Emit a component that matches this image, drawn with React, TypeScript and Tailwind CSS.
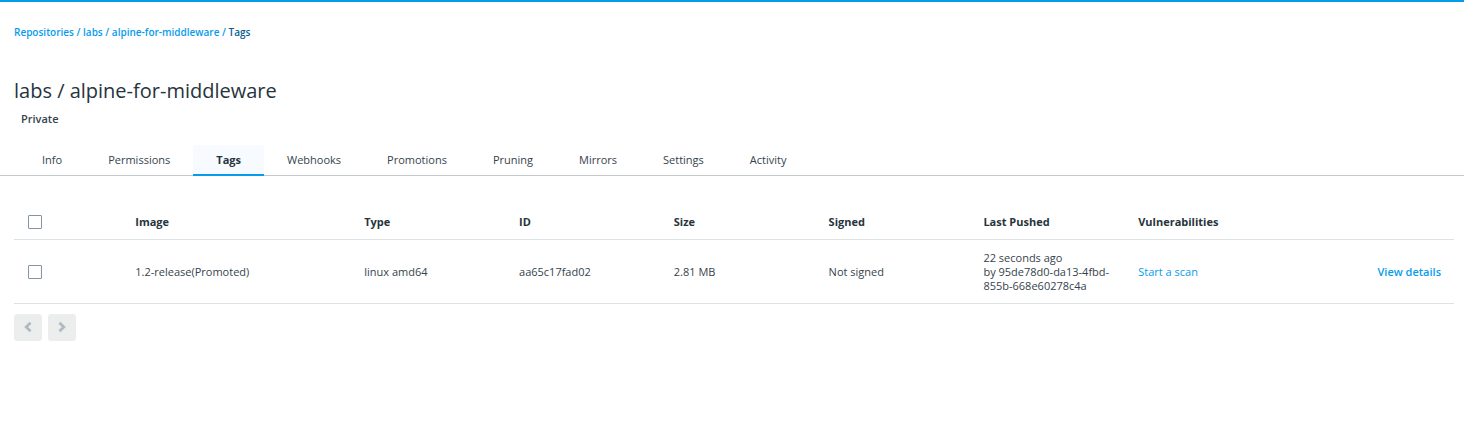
import React from "react";

const tabs = ["Info", "Permissions", "Tags", "Webhooks", "Promotions", "Pruning", "Mirrors", "Settings", "Activity"];

const columns = ["Image", "Type", "ID", "Size", "Signed", "Last Pushed", "Vulnerabilities"];

function Chevron({ d }: { d: string }) {
  return (
    <svg viewBox="0 0 10 12" className="h-3 w-2.5" fill="none" stroke="#b0bac2" strokeWidth="2.8" aria-hidden="true">
      <path d={d} />
    </svg>
  );
}

function Box({ label }: { label: string }) {
  return (
    <input
      type="checkbox"
      aria-label={label}
      className="block size-3.5 appearance-none rounded-[1px] border border-[#8494a4] bg-white checked:bg-[#069cec]"
    />
  );
}

export default function App() {
  return (
    <div className="border-t-2 border-[#069cec] bg-white font-['Open_Sans',sans-serif] text-[11px] leading-[14px] text-[#36434c]">
      <nav aria-label="Breadcrumb" className="px-3.5 pt-[23px] text-[10px] font-semibold text-[#069cec]">
        <a href="#repositories">Repositories</a> / <a href="#labs">labs</a> /{" "}
        <a href="#repository">alpine-for-middleware</a> / <span className="text-[#086094]">Tags</span>
      </nav>
      <h1 className="mt-10 px-3.5 text-[20px] leading-6 font-medium text-[#27343c]">labs / alpine-for-middleware</h1>
      <p className="mt-[9px] px-[21px] font-semibold">Private</p>
      <nav aria-label="Repository" className="mt-[19px] flex border-b border-[#c3c8ca] px-[19px]">
        {tabs.map((tab) => (
          <a
            key={tab}
            href={`#${tab.toLowerCase()}`}
            aria-current={tab === "Tags" ? "page" : undefined}
            className={
              tab === "Tags"
                ? "-mb-px border-b-2 border-[#069cec] bg-[#f7faff] px-[23px] pt-2 pb-[7px] font-bold text-[#27343c]"
                : "px-[23px] pt-2 pb-[7px]"
            }
          >
            {tab}
          </a>
        ))}
      </nav>
      <main className="pt-7 pr-2.5 pl-3.5">
        <table className="w-full table-fixed border-collapse text-left [&_td]:pt-0.5 [&_th]:pt-0.5">
          <colgroup>
            <col className="w-[7.45%]" />
            <col className="w-[15.9%]" />
            <col className="w-[10.75%]" />
            <col className="w-[10.75%]" />
            <col className="w-[10.75%]" />
            <col className="w-[10.75%]" />
            <col className="w-[10.75%]" />
            <col className="w-[10.75%]" />
            <col />
          </colgroup>
          <thead>
            <tr className="h-[35px] border-b border-[#dfe2e3]">
              <th className="pl-3.5"><Box label="Select all tags" /></th>
              {columns.map((column) => (
                <th key={column} className="px-3.5 font-bold text-[#27343c]">{column}</th>
              ))}
              <th aria-label="Actions" />
            </tr>
          </thead>
          <tbody>
            <tr className="h-16 border-b border-[#dfe2e3]">
              <td className="pl-3.5"><Box label="Select 1.2-release" /></td>
              <td className="px-3.5">1.2-release(Promoted)</td>
              <td className="px-3.5">linux amd64</td>
              <td className="px-3.5">aa65c17fad02</td>
              <td className="px-3.5">2.81 MB</td>
              <td className="px-3.5">Not signed</td>
              <td className="pr-3 pl-3.5">22 seconds ago<br />by 95de78d0-da13-4fbd-855b-668e60278c4a</td>
              <td className="px-3.5"><a href="#scan" className="text-[#069cec]">Start a scan</a></td>
              <td className="pr-[13px] text-right"><a href="#details" className="font-semibold text-[#069cec]">View details</a></td>
            </tr>
          </tbody>
        </table>
        <div className="mt-2.5 flex gap-1.5">
          <button type="button" aria-label="Previous page" className="flex h-[27px] w-7 items-center justify-center rounded-[3px] bg-[#eceeee]"><Chevron d="M7.5 1.7 3.2 6l4.3 4.3" /></button>
          <button type="button" aria-label="Next page" className="flex h-[27px] w-7 items-center justify-center rounded-[3px] bg-[#eceeee]"><Chevron d="M2.5 1.7 6.8 6l-4.3 4.3" /></button>
        </div>
      </main>
    </div>
  );
}
